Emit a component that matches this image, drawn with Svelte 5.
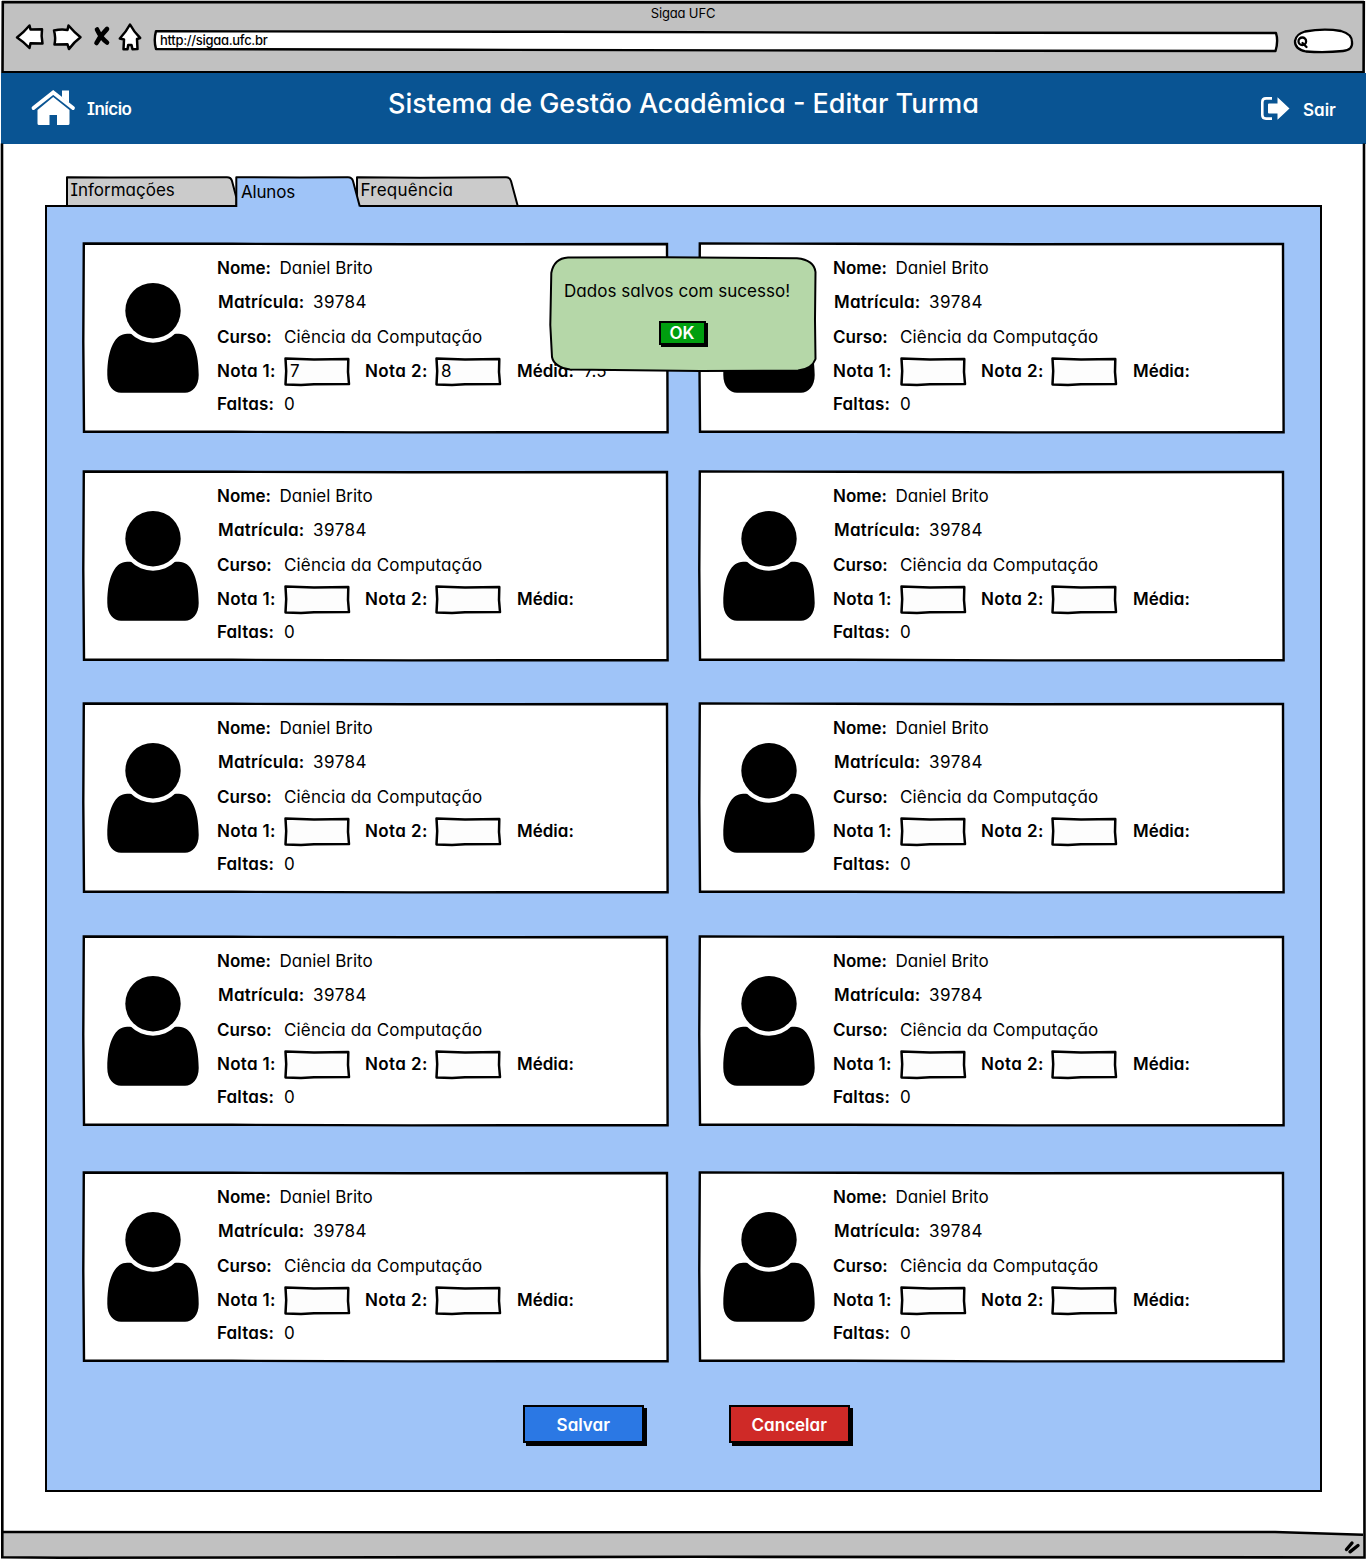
<script>
  const students = Array.from({ length: 10 }, (_, i) => ({
    name: 'Daniel Brito',
    id: '39784',
    course: 'Ciência da Computação',
    grade1: i === 0 ? '7' : '',
    grade2: i === 0 ? '8' : '',
    average: i === 0 ? '7.5' : '',
    absences: '0'
  }));
</script>

{#snippet gradeBox(value)}
  <span class="grade">
    <svg viewBox="0 0 66 30" aria-hidden="true">
      <path d="M1.500 1.500 L30 2.500 L64.300 2 L64 15 L65 27 L30 27.200 L17 28 L1.500 27.400 L2.200 14 Z" fill="#fdfdfd" stroke="#000" stroke-width="2.500" stroke-linejoin="round" />
    </svg>
    <b>{value}</b>
  </span>
{/snippet}

<div class="window">
  <header class="chrome">
    <div class="wintitle">Sigaa UFC</div>
    <div class="controls">
      <svg class="navicons" viewBox="14 22 130 30" fill="#fff" stroke="#000" stroke-width="2.500" stroke-linejoin="round" stroke-linecap="round" aria-hidden="true">
        <path d="M17 37.500 Q24 32 29.500 25.500 L30.500 29.500 L42 29.200 Q41 36 42.500 43.500 L30.500 43.300 L29.500 48 Q24 42 17 37.500 Z" />
        <path d="M54 30.500 Q61 29 67.500 30 L68.500 25.500 Q74 32 80.500 37.200 Q74 42 69 49 L67.500 44.300 L54.500 44.500 Q56 38 54 30.500 Z" />
        <path d="M97 29.500 Q101 38 107 42.500 M107 29 Q100 36 96.500 43" fill="none" stroke-width="4.600" />
        <path d="M130 24.500 Q134 32 140.200 38 L137 39 L137.500 49 L132.500 49.200 L131.500 45 L128.200 45 L127.500 49.200 L123.500 49.200 L124 39.500 L119.800 38.500 Q126 32 130 24.500 Z" />
      </svg>
      <div class="url">
        <svg viewBox="0 0 1126 24" preserveAspectRatio="none" aria-hidden="true">
          <path d="M3 2.200 L400 2.800 L700 3.600 L1123 4 Q1125.500 12 1122.500 22 L700 21.500 L300 20.800 L3 20 Q0.500 11 3 2.200 Z" fill="#fff" stroke="#000" stroke-width="2.400" stroke-linejoin="round" />
        </svg>
        <span>http://sigaa.ufc.br</span>
      </div>
      <svg class="search" viewBox="1292 26 64 30" fill="none" stroke="#000" stroke-width="2.300" stroke-linecap="round" aria-hidden="true">
        <path d="M1305 31.500 Q1324 28 1341 31 Q1352 34 1352 42 Q1353 50 1343 51 Q1325 53 1306 51.500 Q1294.500 49 1295 41 Q1296 34 1305 31.500 Z" fill="#fff" />
        <circle cx="1302.300" cy="41.300" r="3.800" />
        <path d="M1302.500 43 L1306.500 47" />
      </svg>
    </div>
  </header>

  <div class="bar">
    <a class="home" href="#inicio">
      <svg viewBox="31 89 44 37" aria-hidden="true">
        <path d="M33.500 108 L53.200 92.500 L73 108" fill="none" stroke="#fff" stroke-width="3.800" stroke-linecap="round" stroke-linejoin="miter" />
        <path d="M62 90.500 H69 V103 L62 97.500 Z M53.200 97 L69.500 110 V123.500 Q69.500 125 68 125 H57 V115 H49.500 V125 H39 Q37.500 125 37.500 123.500 V110 Z" fill="#fff" />
      </svg>
      <span>Início</span>
    </a>
    <h1>Sistema de Gestão Acadêmica - Editar Turma</h1>
    <a class="exit" href="#sair">
      <svg viewBox="1260 96 30 25" aria-hidden="true">
        <path d="M1272 98.400 H1266 Q1262.300 98.400 1262.300 102 V115 Q1262.300 118.600 1266 118.600 H1272" fill="none" stroke="#fff" stroke-width="2.600" />
        <path d="M1269 103.500 H1277.500 V97.200 L1289.500 108.500 L1277.500 119.800 V113.500 H1269 Q1268 113.500 1268 112.500 V104.500 Q1268 103.500 1269 103.500 Z" fill="#fff" />
      </svg>
      <span>Sair</span>
    </a>
  </div>

  <main>
    <nav class="tabs">
      <svg viewBox="66 175 454 32" fill="#cbcbcb" stroke="#000" stroke-width="2" stroke-linejoin="round" aria-hidden="true">
        <path d="M67 207 V177.300 L110 177.500 L227 177.300 Q231 177.300 232 181 L236.500 198 V207" />
        <path d="M357 207 V177.300 L420 177.800 L506 177.300 Q510 177.300 511 181 L518 207" />
      </svg>
      <span class="info">Informações</span><span class="freq">Frequência</span>
    </nav>

    <section class="panel">
      <svg class="active" viewBox="234 175 130 34" aria-hidden="true">
        <path d="M236.300 209 V177.300 L300 177.500 L348 177.200 Q352 177.200 353 181 L359.800 206.500 V209 Z" fill="#9fc4f8" />
        <path d="M236.300 207 V177.300 L300 177.500 L348 177.200 Q352 177.200 353 181 L359.800 206.500" fill="none" stroke="#000" stroke-width="2" stroke-linejoin="round" />
      </svg>
      <span class="activelabel">Alunos</span>

      <div class="cards">
        {#each students as s}
          <article class="card">
            <svg class="outline" viewBox="0 0 587 192" aria-hidden="true">
              <path d="M1.800 1.500 L150 1.800 L330 2.300 L585 2 L585.300 100 L585.600 190.200 L330 190.400 L150 189.800 L2 189.800 L1.300 100 Z" fill="#fff" stroke="#000" stroke-width="2.400" stroke-linejoin="miter" />
            </svg>
            <svg class="avatar" viewBox="107 282 92 111" aria-hidden="true">
              <path d="M128 333.700 C116 333 107.300 347 107.300 375 C107.300 386 113.500 392.700 121 392.700 H185 C192.500 392.700 198.700 386 198.700 375 C198.700 347 190 333 178 333.700 Z" />
              <circle cx="153" cy="310.700" r="32" fill="#fff" />
              <circle cx="153" cy="310.700" r="27.700" />
            </svg>
            <div class="rows">
              <div class="row"><span class="label nome">Nome:</span><span class="name">{s.name}</span></div>
              <div class="row"><span class="label matricula">Matrícula:</span><span class="id">{s.id}</span></div>
              <div class="row"><span class="label curso">Curso:</span><span class="course">{s.course}</span></div>
              <div class="row">
                <span class="label nota1">Nota 1:</span>{@render gradeBox(s.grade1)}
                <span class="label nota2">Nota 2:</span>{@render gradeBox(s.grade2)}
                <span class="label media">Média:</span><span>{s.average}</span>
              </div>
              <div class="row"><span class="label faltas">Faltas:</span><span>{s.absences}</span></div>
            </div>
          </article>
        {/each}
      </div>

      <div class="actions">
        <button class="btn save">Salvar</button>
        <button class="btn cancel">Cancelar</button>
      </div>
    </section>
  </main>

  <footer>
    <svg viewBox="0 1530 1366 30" aria-hidden="true">
      <path d="M3 1532 L500 1531.600 L1275 1532 L1363 1534.800 V1558 H3 Z" fill="#c1c1c1" />
      <path d="M3 1532 L500 1532.200 L1275 1532 L1363 1534.800" fill="none" stroke="#000" stroke-width="2.400" />
      <path d="M1346.500 1549.500 L1352 1543 M1350 1551.800 L1358 1545.500" stroke="#000" stroke-width="3.400" stroke-linecap="round" />
    </svg>
  </footer>

  <svg class="frame" viewBox="0 0 1366 1560" fill="none" stroke="#000" stroke-width="2.600" aria-hidden="true">
    <path d="M2.500 73 L2.800 2.200 L700 2.400 L1363.800 2.200 L1363.600 73" />
    <path d="M2 143.500 L2.500 800 L2.300 1557.300 L60 1557.800 L700 1556.800 L1364.500 1557.500 L1363.800 800 L1364 143.500" />
  </svg>

  <div class="dialog" role="alertdialog">
    <svg viewBox="548 255 270 118" aria-hidden="true">
      <path d="M568 257.600 L663 257.200 L797 258.300 Q814 260 815.500 272 L815 320 L815.500 359 Q812 369 798 370.500 L700 371 L570 369.600 Q554 367 552 357 L550.300 325 L551.300 273 Q554 258.500 568 257.600 Z" fill="#b5d7a8" stroke="#000" stroke-width="2" />
    </svg>
    <p>Dados salvos com sucesso!</p>
    <button class="ok">OK</button>
  </div>
</div>

<style>
  :global(body) { background: #fff; }
  * { box-sizing: border-box; }
  .window {
    position: relative;
    width: 1366px;
    height: 1560px;
    overflow: hidden;
    display: flex;
    flex-direction: column;
    font-family: Inter, "Open Sans", sans-serif;
    font-feature-settings: "cv11", "ss03", "cv08";
    font-size: 17px;
    line-height: 20px;
    color: #000;
    background: #fff;
  }
  svg { display: block; overflow: visible; flex: none; }
  .frame { position: absolute; inset: 0; width: 1366px; height: 1560px; pointer-events: none; }

  .chrome { height: 73px; margin: 0 2px; background: #c1c1c1; border-bottom: 2px solid #000; }
  .wintitle { padding-top: 5px; height: 22px; text-align: center; font-size: 13px; line-height: 16px; letter-spacing: -0.15px; }
  .controls { display: flex; height: 34px; padding-left: 12px; }
  .navicons { width: 130px; height: 30px; }
  .url { position: relative; width: 1126px; height: 24px; margin: 7px 0 0 9px; }
  .url svg { position: absolute; inset: 0; width: 1126px; height: 24px; }
  .url span { position: relative; display: block; padding: 3px 0 0 7px; font-size: 13px; line-height: 16px; letter-spacing: -0.3px; font-weight: 500; }
  .search { width: 64px; height: 30px; margin: 4px 0 0 13px; }

  .bar { display: flex; height: 70.5px; margin-left: 1px; background: #095493; color: #fff; }
  .bar a { display: flex; color: #fff; text-decoration: none; font-size: 17px; font-weight: 600; }
  .home { width: 387px; padding-left: 30px; }
  .home svg { width: 44px; height: 37px; margin-top: 16px; }
  .home span { margin: 26px 0 0 12px; letter-spacing: -0.5px; }
  h1 { width: 592px; margin: 14px 0 0; font-size: 27px; line-height: 34px; font-weight: 500; white-space: nowrap; }
  .exit { margin-left: 280px; }
  .exit svg { width: 30px; height: 25px; margin-top: 23px; }
  .exit span { margin: 27px 0 0 13px; }

  main { flex: 1; padding: 31.500px 0 0 45px; }
  .tabs { position: relative; display: flex; height: 30px; margin-left: 21px; }
  .tabs svg { position: absolute; left: 0; top: 0; width: 454px; height: 32px; }
  .tabs span { position: relative; padding: 5px 0 0 4.500px; }
  .info { width: 290px; }
  .freq { letter-spacing: 0.25px; }

  .panel { position: relative; width: 1277px; height: 1286.500px; border: 2.500px solid #000; background: #9fc4f8; }
  .active { position: absolute; left: 187px; top: -32px; width: 130px; height: 34px; }
  .activelabel { position: absolute; left: 194px; top: -25px; letter-spacing: -0.2px; }

  .cards {
    display: grid;
    grid-template-columns: 587px 587px;
    grid-template-rows: 228px 232px 233px 236px 192px;
    column-gap: 29px;
    align-items: start;
    padding: 35px 0 0 35px;
  }
  .card { position: relative; display: flex; width: 587px; height: 192px; }
  .outline { position: absolute; inset: 0; width: 587px; height: 192px; }
  .avatar { position: relative; width: 92px; height: 111px; margin: 40px 0 0 25px; }
  .rows {
    position: relative;
    display: grid;
    grid-template-rows: 34px 35px 34px 33px 20px;
    padding: 16px 0 0 18px;
    width: 450px;
    height: 172px;
  }
  .row { display: flex; white-space: nowrap; height: 20px; }
  .label { flex: none; font-weight: 600; }
  .nome { width: 62.500px; }
  .matricula { width: 96px; padding-left: 1px; letter-spacing: 0.2px; }
  .curso { width: 67px; }
  .nota1 { width: 67px; letter-spacing: 0.3px; }
  .nota2 { width: 70px; margin-left: 15px; letter-spacing: 0.4px; }
  .media { width: 67px; margin-left: 16px; }
  .faltas { width: 67px; letter-spacing: 0.15px; }
  .name { letter-spacing: 0; }
  .id { letter-spacing: 0.5px; }
  .course { letter-spacing: 0.15px; }
  .grade { position: relative; width: 66px; height: 30px; margin-top: -4px; }
  .grade svg { position: absolute; inset: 0; width: 66px; height: 30px; }
  .grade b { position: relative; display: block; padding: 4px 0 0 6px; font-weight: 400; }

  .actions { display: flex; gap: 85.500px; padding: 42px 0 0 476px; }
  button { font: inherit; font-feature-settings: inherit; color: #fff; font-weight: 600; padding: 0; border-radius: 0; border: 2px solid #000; }
  .btn { width: 120.500px; height: 38px; padding-top: 2px; box-shadow: 3px 3px 0 #000; }
  .save { background: #2b78e4; }
  .cancel { background: #cf2a27; }

  footer { position: absolute; left: 0; bottom: 0; height: 30px; }
  footer svg { width: 1366px; height: 30px; }

  .dialog { position: absolute; left: 548px; top: 255px; width: 270px; height: 118px; display: flex; flex-direction: column; align-items: center; }
  .dialog svg { position: absolute; inset: 0; width: 270px; height: 118px; }
  .dialog p { position: relative; align-self: flex-start; margin: 26px 0 0 16px; white-space: nowrap; letter-spacing: 0.05px; }
  .ok { position: relative; width: 47px; height: 24px; margin: 20px 2px 0 0; background: #009e0f; line-height: 20px; box-shadow: 2px 2px 0 #000; }
</style>
